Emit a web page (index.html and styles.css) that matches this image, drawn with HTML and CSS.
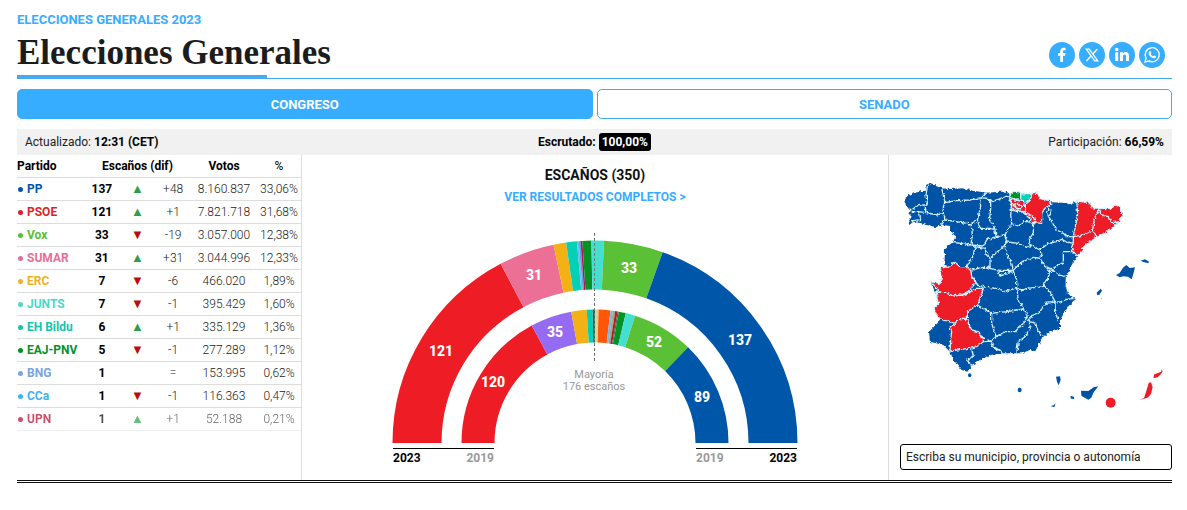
FILE: index.html
```html
<!DOCTYPE html>
<html lang="es">
<head>
    <meta charset="UTF-8">
    <meta name="viewport" content="width=device-width, initial-scale=1.0">
    <title>Elecciones Generales 2023</title>
    <link rel="stylesheet" href="styles.css">
</head>
<body>

<header class="header">
    <div>
        <a class="eyebrow" href="#">ELECCIONES GENERALES 2023</a>
        <h1>Elecciones Generales</h1>
    </div>
    <div class="share">
        <a href="#" aria-label="Facebook">
            <svg viewBox="0 0 26 26"><path d="M11.2 20v-6.2H9v-2.7h2.2V9.3c0-2.4 1.3-3.6 3.4-3.6.8 0 1.5.1 1.9.2v2.3h-1.2c-1 0-1.3.5-1.3 1.2v1.7h2.5l-.4 2.7H14V20z"/></svg>
        </a>
        <a href="#" aria-label="X">
            <svg viewBox="0 0 26 26"><path class="stroke" d="M7.3 7.2h3l8.4 11.6h-3zM18.4 7l-4.7 5.2M12 14l-4.6 5"/></svg>
        </a>
        <a href="#" aria-label="LinkedIn">
            <svg viewBox="0 0 26 26"><path d="M6.2 10.2h3V19h-3zM11 10.2h2.900v1.300c.5-.9 1.500-1.500 2.700-1.500 2.700 0 3.400 1.700 3.400 4.100V19h-3v-4.300c0-1.200-.2-2.100-1.400-2.100s-1.600.9-1.600 2.100V19h-3z"/><circle cx="7.7" cy="7.5" r="1.8"/></svg>
        </a>
        <a href="#" aria-label="WhatsApp">
            <svg viewBox="0 0 26 26"><path class="stroke" d="M6 20l1-4a7 7 0 1 1 2.900 2.900z"/><path d="M10.600 9.200c.4-.3.900-.2 1.100.2l.6 1.300c.1.400-.4.900-.6 1.200.6 1.200 1.500 1.900 2.600 2.400.4-.3.700-1 1.100-.9l1.500.8c.3.200.1 1.100-.3 1.500-1 .9-2.500.6-3.900-.2-1.500-.9-2.900-2.500-3.100-4-.1-1 .4-1.800 1-2.300z"/></svg>
        </a>
    </div>
</header>

<div class="tabs">
    <button class="tab active" type="button">CONGRESO</button>
    <button class="tab" type="button">SENADO</button>
</div>

<div class="status">
    <span>Actualizado: <b>12:31 (CET)</b></span>
    <span class="counted"><b>Escrutado:</b> <b class="badge">100,00%</b></span>
    <span class="turnout">Participación: <b>66,59%</b></span>
</div>

<main class="results">
    <section class="parties">
        <table>
            <thead>
                <tr>
                    <th class="name">Partido</th>
                    <th colspan="3">Escaños (dif)</th>
                    <th class="votes">Votos</th>
                    <th class="pct">%</th>
                </tr>
            </thead>
            <tbody>
                <tr><td class="name pp">PP</td><td class="seats">137</td><td class="up">▲</td><td>+48</td><td>8.160.837</td><td>33,06%</td></tr>
                <tr><td class="name psoe">PSOE</td><td class="seats">121</td><td class="up">▲</td><td>+1</td><td>7.821.718</td><td>31,68%</td></tr>
                <tr><td class="name vox">Vox</td><td class="seats">33</td><td class="down">▼</td><td>-19</td><td>3.057.000</td><td>12,38%</td></tr>
                <tr><td class="name sumar">SUMAR</td><td class="seats">31</td><td class="up">▲</td><td>+31</td><td>3.044.996</td><td>12,33%</td></tr>
                <tr><td class="name erc">ERC</td><td class="seats">7</td><td class="down">▼</td><td>-6</td><td>466.020</td><td>1,89%</td></tr>
                <tr><td class="name junts">JUNTS</td><td class="seats">7</td><td class="down">▼</td><td>-1</td><td>395.429</td><td>1,60%</td></tr>
                <tr><td class="name bildu">EH Bildu</td><td class="seats">6</td><td class="up">▲</td><td>+1</td><td>335.129</td><td>1,36%</td></tr>
                <tr><td class="name pnv">EAJ-PNV</td><td class="seats">5</td><td class="down">▼</td><td>-1</td><td>277.289</td><td>1,12%</td></tr>
                <tr><td class="name bng">BNG</td><td class="seats">1</td><td></td><td>=</td><td>153.995</td><td>0,62%</td></tr>
                <tr><td class="name cca">CCa</td><td class="seats">1</td><td class="down">▼</td><td>-1</td><td>116.363</td><td>0,47%</td></tr>
                <tr class="faded"><td class="name upn">UPN</td><td class="seats">1</td><td class="up">▲</td><td>+1</td><td>52.188</td><td>0,21%</td></tr>
            </tbody>
        </table>
    </section>

    <section class="chamber">
        <h2>ESCAÑOS (350)</h2>
        <a class="full-link" href="#">VER RESULTADOS COMPLETOS &gt;</a>
        <!-- Each arc has pathLength 350, so dashes are measured in seats -->
        <svg class="arc-chart" viewBox="0 0 406 238" role="img" aria-label="Reparto de escaños">
            <g class="arc outer">
                <path pathLength="350" d="M25 213a178 178 0 0 1 356 0" stroke="#ee1c25" stroke-dasharray="121 700"/>
                <path pathLength="350" d="M25 213a178 178 0 0 1 356 0" stroke="#ec6f95" stroke-dasharray="31 700" stroke-dashoffset="-121"/>
                <path pathLength="350" d="M25 213a178 178 0 0 1 356 0" stroke="#f3b116" stroke-dasharray="7 700" stroke-dashoffset="-152"/>
                <path pathLength="350" d="M25 213a178 178 0 0 1 356 0" stroke="#04d0b6" stroke-dasharray="6 700" stroke-dashoffset="-159"/>
                <path pathLength="350" d="M25 213a178 178 0 0 1 356 0" stroke="#74b5f0" stroke-dasharray="1 700" stroke-dashoffset="-165"/>
                <path pathLength="350" d="M25 213a178 178 0 0 1 356 0" stroke="#5ba0e8" stroke-dasharray="1 700" stroke-dashoffset="-166"/>
                <path pathLength="350" d="M25 213a178 178 0 0 1 356 0" stroke="#b5174b" stroke-dasharray="1 700" stroke-dashoffset="-167"/>
                <path pathLength="350" d="M25 213a178 178 0 0 1 356 0" stroke="#049227" stroke-dasharray="5 700" stroke-dashoffset="-168"/>
                <path pathLength="350" d="M25 213a178 178 0 0 1 356 0" stroke="#43e0d2" stroke-dasharray="7 700" stroke-dashoffset="-173"/>
                <path pathLength="350" d="M25 213a178 178 0 0 1 356 0" stroke="#5ac035" stroke-dasharray="33 700" stroke-dashoffset="-180"/>
                <path pathLength="350" d="M25 213a178 178 0 0 1 356 0" stroke="#0056a8" stroke-dasharray="137 700" stroke-dashoffset="-213"/>
            </g>
            <g class="arc inner">
                <path pathLength="350" d="M86 213a117 117 0 0 1 234 0" stroke="#ee1c25" stroke-dasharray="120 700"/>
                <path pathLength="350" d="M86 213a117 117 0 0 1 234 0" stroke="#956bf3" stroke-dasharray="35 700" stroke-dashoffset="-120"/>
                <path pathLength="350" d="M86 213a117 117 0 0 1 234 0" stroke="#f3b116" stroke-dasharray="13 700" stroke-dashoffset="-155"/>
                <path pathLength="350" d="M86 213a117 117 0 0 1 234 0" stroke="#04d0b6" stroke-dasharray="5 700" stroke-dashoffset="-168"/>
                <path pathLength="350" d="M86 213a117 117 0 0 1 234 0" stroke="#216a55" stroke-dasharray="2 700" stroke-dashoffset="-173"/>
                <path pathLength="350" d="M86 213a117 117 0 0 1 234 0" stroke="#d5d795" stroke-dasharray="3 700" stroke-dashoffset="-175"/>
                <path pathLength="350" d="M86 213a117 117 0 0 1 234 0" stroke="#ff5608" stroke-dasharray="10 700" stroke-dashoffset="-178"/>
                <path pathLength="350" d="M86 213a117 117 0 0 1 234 0" stroke="#74b5f0" stroke-dasharray="2 700" stroke-dashoffset="-188"/>
                <path pathLength="350" d="M86 213a117 117 0 0 1 234 0" stroke="#a5a883" stroke-dasharray="2 700" stroke-dashoffset="-190"/>
                <path pathLength="350" d="M86 213a117 117 0 0 1 234 0" stroke="#b51c24" stroke-dasharray="2 700" stroke-dashoffset="-192"/>
                <path pathLength="350" d="M86 213a117 117 0 0 1 234 0" stroke="#51633c" stroke-dasharray="1 700" stroke-dashoffset="-194"/>
                <path pathLength="350" d="M86 213a117 117 0 0 1 234 0" stroke="#049227" stroke-dasharray="6 700" stroke-dashoffset="-195"/>
                <path pathLength="350" d="M86 213a117 117 0 0 1 234 0" stroke="#43e0d2" stroke-dasharray="8 700" stroke-dashoffset="-201"/>
                <path pathLength="350" d="M86 213a117 117 0 0 1 234 0" stroke="#5ac035" stroke-dasharray="52 700" stroke-dashoffset="-209"/>
                <path pathLength="350" d="M86 213a117 117 0 0 1 234 0" stroke="#0056a8" stroke-dasharray="89 700" stroke-dashoffset="-261"/>
            </g>
            <path class="majority-line" d="M202 3v130"/>
            <g class="arc-label">
                <text x="49" y="126">121</text>
                <text x="142" y="50">31</text>
                <text x="237" y="43">33</text>
                <text x="348" y="115">137</text>
                <text x="101" y="157">120</text>
                <text x="163" y="107">35</text>
                <text x="262" y="117">52</text>
                <text x="310" y="172">89</text>
            </g>
            <g class="majority">
                <text x="202" y="148">Mayoría</text>
                <text x="202" y="160">176 escaños</text>
            </g>
            <path class="base-line" d="M1 218h101M304 218h101"/>
            <g class="years">
                <text x="1" y="232">2023</text>
                <text x="102" y="232" class="old end">2019</text>
                <text x="304" y="232" class="old">2019</text>
                <text x="405" y="232" class="end">2023</text>
            </g>
        </svg>
    </section>

    <section class="territory">
        <svg class="map" viewBox="30 30 816 750" role="img" aria-label="Mapa por provincias">
            <defs>
                <filter id="rough" x="0" y="0" width="1" height="1">
                    <feTurbulence type="fractalNoise" baseFrequency="0.12" numOctaves="2" seed="4"/>
                    <feDisplacementMap in="SourceGraphic" scale="12" xChannelSelector="R" yChannelSelector="G"/>
                </filter>
            </defs>
            <g filter="url(#rough)">
                <path class="land" d="M42 88l13-13 20-5 15-6 18-2v-17l14-6 16 9 17 7 25 2 40-2 30 7 40 6 40-3 20 0 10 7 15-7 15 3 10 5 25-2 15-3 10 17 30 7 5 5 35 1 20 5 20-10 38 4 9 16 23 3 35-1 10-10 17 3-2 12 7 13-10 22-27 25-38 22-27 16-18 17 3 8-18 14-20 33-15 35v25l8 22 23 15-18 15-18 28-12 20v27l-20 3-25 15-15 20-15 30-15-5-25 10h-55l-40 5-30 15-25 15-13 20-17-5-23-28-12-27-20-20-40-10-3-30 28-28 5-10-20-27 15-20-8-30-15-35 28 5 5-25-5-25h13l2-55 25-20 7-20-17-10v-17l-25-3-15 7-30-7-15-5-25-5-12 10-3-10 10-15-10-10 10-10-15-10-5-10z"/>
                <!-- Cáceres, Badajoz, Sevilla -->
                <path class="red" d="M150 290h13l12 2 20-15 15 13h20l13 12 2 18 10 10-4 16-16 18-20 11-25 3-25-8-20-5-8-14-15-16 28 5 5-25z"/>
                <path class="red" d="M137 366l28 2 25 10 25-3 20-6 23-14 22 0-8 25-10 25-30 20v20h-17l-20 15-45-13-20-27 15-20z"/>
                <path class="red" d="M180 475l25-25 10-5 17 5 13 30 20 5 18 28-23 17-20 5-25 3-35 5 2-33 3-25z"/>
                <!-- Navarra, Álava, Cataluña -->
                <path class="red" d="M425 72l18-4 5 17 32 7 2 10-17 13-10 15v30l-25-2-10-12-20-18 5-18 5-10 10-8z"/>
                <path class="red" d="M358 88l20 2 22 5 5 17-2 14-23-4-20-10 8-10z"/>
                <path class="red" d="M560 93l38 4 9 16 23 3 35-1 10-10 17 3-2 12 7 13-10 22-27 25-38 22-27 16-18 17 3 8-18 14-12-9-5-15 5-18v-15l10-50 3-20z"/>
                <path class="green" d="M355 80l7-8 13-9 17 4v18l-17 4-13-6z"/>
                <path class="teal" d="M393 72l35-2-9 21-14 5-13-10z"/>
                <path class="border" d="M112 48l-4 27 4 25-7 5 3 23M155 55l5 20 5 22-5 13v20l-20 5-30-7-25-3-20 0M65 120l15-12 27-4M85 125l3 15 7 8-30 5M160 130l5 17-10 18M165 98l35-6 40-2 35-7 10-10 5-5M275 83l15 2 15 10 15-5 25-10 10-2M270 88l2 22-7 30-3 10-22 12-40-7-35-5M243 162l4 28-4 35-28-5-25-2M262 150l8 25h30l15 4M302 93v27l-4 30 12 15 5 15 3 20-28 10-10 18-37-3"/>
                <path class="border" d="M355 80l10 25-3 30 3 25-15 25-5 10-27 5M365 120l20 5h20l25 15 5 15-10 10M365 160l20 8 15-13 15 0 15 10v25l-12 15 2 20 30 15M345 195l5 20-5 10M345 215l40 5 25 12 15-8M255 230l30 5 5 20 10 10 45-40 5 25 15 30 5 20M255 230l-5 25-20 35M245 300l30-8 25 2v-29M298 295l32 6h40l25-25 35-14 20 3M330 300l-5 10 5 8 40-14 10 26v25l15 5 15-5 50-5M255 330l5 15 30 7 30 3 25 10 35-12"/>
                <path class="border" d="M480 97l-5 18-5 15 15 25 15 25 20 10 10 10 20 0M475 115l10 10-8 15M550 200l30-5 28-14 4-31 8-20 8-14M608 181l14 21M628 117l7 18 20 5 10 18 22-2M520 190M450 240l25-20 25-5 15-7 15 8 20 4M450 240l7 15-7 10 15 25 20 8 20-13 15-5v-35h28M485 298l20 17 23 5M485 300l-10 20-15 25 20 20 10 20 5 10 15 1 20-8 25-3"/>
                <path class="border" d="M380 355l5 35 15 25 12 20-7 20-12 12-18 18-30 0-27 15-13-40v-30l-43-25M305 430l45-5 50-8M412 452l18-17 20-10 15-25 20-2 10-3-1 30 12 28M420 455l17 5 8 25 12 12M418 450l2 25-15 25-20 15-5 33M318 500l-15 13-20 2M303 512l7 18 25 15v8M245 537l5 23-20 10 15 15"/>
                <path class="border" d="M370 103l12-3 14 8-2 9-16-3zM472 292l14 4 5 6-10 3-10-6z"/>
            </g>
            <!-- Islas, Ceuta y Melilla -->
            <path class="blue" d="M678 315l11-6 10-16 10-8 10 9 16-2-4 16-6 20-11-8-14-1-11 3zM752 272l13-4 12 7-2 5-15-4zM620 368l12-12 4 6-8 12-6 2zM632 385l3-1v2z"/>
            <ellipse class="blue" cx="239" cy="616" rx="5" ry="6"/>
            <ellipse class="blue" cx="389" cy="660" rx="6" ry="7"/>
            <path class="blue" d="M498 620l12-1 2 11-6 16-5-11zM482 708l9-2 6-6-4 12zM540 680l5-2 7 3 1 5-8 1zM573 662l22 1 16-11 14-3-14 18-7 16-9 6-11-6-10-6z"/>
            <circle class="red" cx="662" cy="698" r="15"/>
            <path class="red" d="M748 690l14-6 5-14 9-31 7-2 5 14-5 21-10 11-14 4zM790 625l3-12 13-5 8-3v-7l4 6-4 7-11 11z"/>
        </svg>
        <input type="text" aria-label="Municipio, provincia o autonomía" placeholder="Escriba su municipio, provincia o autonomía">
    </section>
</main>

</body>
</html>
```
FILE: styles.css
```css
* {
    box-sizing: border-box;
}
body {
    font-family: Roboto, "Liberation Sans", sans-serif;
    font-size: 12px;
    color: #222;
    background-color: #fff;
    margin: 0;
    padding: 12px 15px 0 17px;
}
a {
    color: #36adff;
    text-decoration: none;
}
.header {
    position: relative;
    display: flex;
    justify-content: space-between;
    border-bottom: 1px solid #46aae8;
    height: 67px;
}
.header::after {
    content: "";
    position: absolute;
    left: 0;
    bottom: -1px;
    width: 250px;
    height: 4px;
    background-color: #46aaf0;
}
.eyebrow {
    display: block;
    font-size: 13px;
    line-height: 16px;
    font-weight: 700;
}
h1 {
    font-family: "Liberation Serif", serif;
    font-size: 35px;
    line-height: 40px;
    font-weight: 700;
    color: #1c1c1c;
    margin: 5px 0 0;
}
.share {
    display: flex;
    align-self: flex-end;
    gap: 4px;
    padding: 0 7px 10px 0;
}
.share a {
    width: 26px;
    height: 26px;
    border-radius: 50%;
    background-color: #36adff;
}
.share svg {
    display: block;
    fill: #fff;
}
.share .stroke {
    fill: none;
    stroke: #fff;
    stroke-width: 1.3;
}
.tabs {
    display: flex;
    gap: 4px;
    margin-top: 10px;
}
.tab {
    flex: 1;
    height: 30px;
    border: 1px solid #46aae8;
    border-radius: 5px;
    background-color: #fff;
    color: #36adff;
    font-family: inherit;
    font-size: 13px;
    font-weight: 700;
    cursor: pointer;
}
.tab.active {
    background-color: #36adff;
    border-color: #36adff;
    color: #fff;
}
.status {
    display: grid;
    grid-template-columns: 1fr 1fr 1fr;
    align-items: center;
    height: 26px;
    margin-top: 10px;
    padding: 0 8px;
    background-color: #f1f1f1;
}
.status b {
    color: #000;
}
.counted {
    text-align: center;
}
.turnout {
    text-align: right;
}
.status .badge {
    display: inline-block;
    padding: 2px 3px;
    border-radius: 3px;
    background-color: #000;
    color: #fff;
}
.results {
    display: grid;
    grid-template-columns: 285px 1fr 284px;
    border-bottom: 3px double #111;
    box-shadow: 0 1px 0 #46aae8;
}
.parties {
    border-right: 1px solid #ddd;
}
table {
    width: 100%;
    table-layout: fixed;
    border-collapse: collapse;
}
th, td {
    height: 23px;
    padding: 0;
    border-bottom: 1px solid #ddd;
    text-align: center;
    font-weight: 300;
}
th {
    height: 22px;
    font-weight: 700;
    color: #000;
}
.name {
    width: 67px;
    text-align: left;
    font-weight: 700;
}
.votes {
    width: 66px;
}
.pct {
    width: 44px;
    font-weight: 400;
}
td.name::before {
    content: "";
    display: inline-block;
    width: 5px;
    height: 5px;
    margin: 0 4px 1px 1px;
    border-radius: 50%;
    background-color: currentColor;
}
.seats {
    font-weight: 700;
    color: #000;
}
.up, .down {
    font-family: "DejaVu Sans", sans-serif;
    font-size: 13px;
    line-height: 13px;
}
.up {
    color: #2e9e4d;
}
.down {
    color: #b80d0d;
}
.faded td {
    opacity: 0.7;
    border-color: #eee;
}
.pp { color: #0056a8; }
.psoe { color: #de1f2b; }
.vox { color: #5ac035; }
.sumar { color: #e66f95; }
.erc { color: #edb127; }
.junts { color: #4ad9c6; }
.bildu { color: #12c4ad; }
.pnv { color: #049227; }
.bng { color: #79a5e2; }
.cca { color: #3fb2f3; }
.upn { color: #b5052c; }
.chamber {
    text-align: center;
    padding-top: 11px;
}
h2 {
    margin: 0;
    font-size: 14px;
    line-height: 18px;
    font-weight: 700;
    color: #111;
}
.full-link {
    display: block;
    margin-top: 4px;
    font-size: 12px;
    line-height: 18px;
    font-weight: 700;
}
.arc-chart {
    display: block;
    width: 100%;
    max-width: 406px;
    margin: 24px auto 0;
}
.arc path {
    fill: none;
}
.outer path {
    stroke-width: 49px;
}
.inner path {
    stroke-width: 33px;
}
.arc-label {
    fill: #fff;
    font-size: 14px;
    font-weight: 800;
    text-anchor: middle;
}
.majority-line {
    stroke: #777;
    stroke-dasharray: 3 2;
    shape-rendering: crispEdges;
}
.majority {
    fill: #999;
    font-size: 11px;
    text-anchor: middle;
}
.base-line {
    stroke: #000;
    shape-rendering: crispEdges;
}
.years {
    fill: #000;
    font-size: 12px;
    font-weight: 700;
}
.years .old {
    fill: #999;
}
.years .end {
    text-anchor: end;
}
.territory {
    border-left: 1px solid #ddd;
    padding: 25px 0 10px 11px;
}
.map {
    display: block;
    width: 100%;
}
.land, .blue {
    fill: #0053a5;
}
.red {
    fill: #ee1c25;
}
.green {
    fill: #049227;
}
.teal {
    fill: #04d0b6;
}
.map g .red, .map g .green, .map g .teal, .border {
    stroke: #d5f1ff;
    stroke-width: 4px;
    stroke-linejoin: round;
}
.border {
    fill: none;
}
input {
    display: block;
    width: 100%;
    height: 26px;
    margin-top: 14px;
    padding: 0 5px;
    border: 1px solid #000;
    border-radius: 3px;
    font-family: inherit;
    font-size: 12px;
}
input::placeholder {
    color: #222;
    opacity: 1;
}
@media only screen and (max-width: 900px) {
    .results {
        grid-template-columns: 1fr;
    }
}
```
